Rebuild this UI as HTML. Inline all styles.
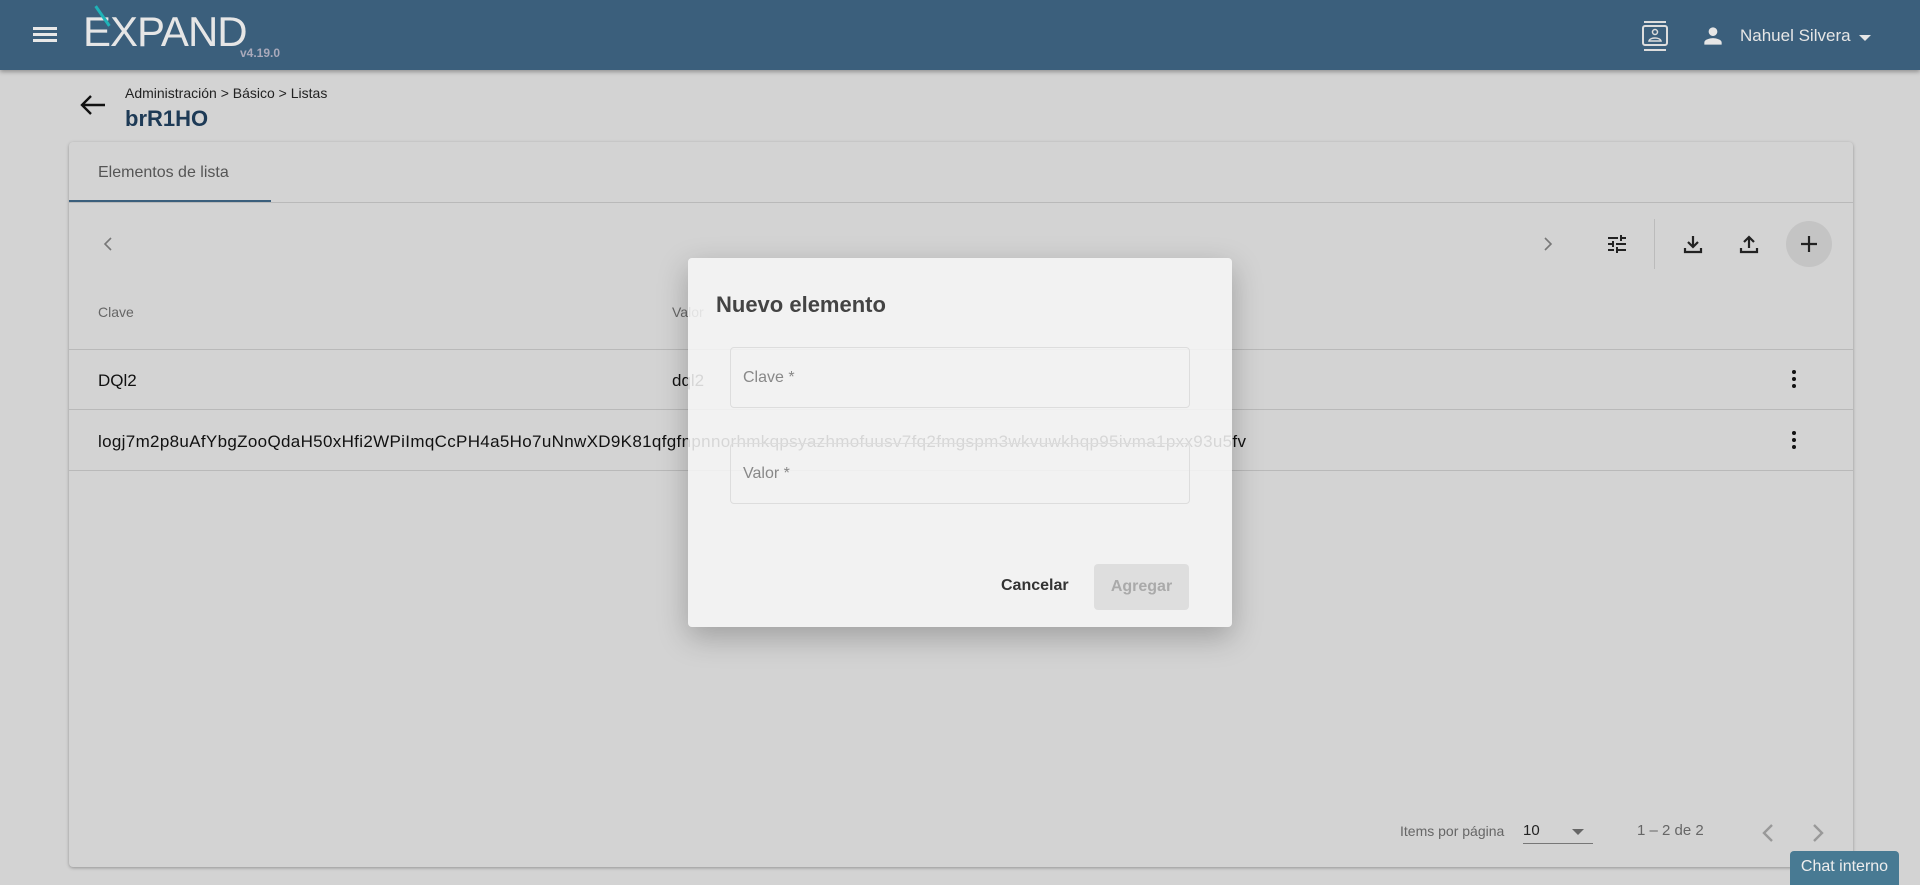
<!DOCTYPE html>
<html><head><meta charset="utf-8"><style>
*{box-sizing:border-box;margin:0;padding:0}
body{width:1920px;height:885px;overflow:hidden;background:#d3d3d3;font-family:"Liberation Sans",sans-serif;position:relative;color:#222}
.hdr{position:absolute;left:0;top:0;width:1920px;height:70px;background:#3b5f7c;box-shadow:0 2px 4px rgba(0,0,0,.3)}
.abs{position:absolute}
.card{position:absolute;left:69px;top:142px;width:1784px;height:725px;background:#d3d3d3;border-radius:4px;box-shadow:0 1px 3px rgba(0,0,0,.3)}
.line{position:absolute;left:0;width:1784px;height:1px;background:#b9b9b9}
.dlg{position:absolute;left:688px;top:258px;width:544px;height:369px;background:rgba(247,247,247,.86);border-radius:4px;box-shadow:0 10px 30px rgba(0,0,0,.25)}
.fld{position:absolute;left:42px;width:460px;height:61px;border:1px solid #ddd;border-radius:4px;color:#888;font-size:16px;padding:21px 12px}
</style></head><body>
<div class="hdr">
 <div class="abs" style="left:33px;top:27px;width:24px;height:3px;background:#e8e8e8;box-shadow:0 6px 0 #e8e8e8,0 12px 0 #e8e8e8"></div>
 <div class="abs" style="left:83px;top:8px;font-size:42px;color:#e6e6e6;letter-spacing:-1px;font-weight:300">EXPAND</div>
 <div class="abs" style="left:101px;top:4px;width:3px;height:24px;background:#1fb3b8;transform:rotate(-35deg)"></div>
 <div class="abs" style="left:240px;top:46px;font-size:12px;color:#aab;font-weight:bold">v4.19.0</div>
 <svg class="abs" style="left:1641px;top:20px" width="28" height="32" viewBox="0 0 28 32"><rect x="3" y="1" width="22" height="2" fill="#ddd"/><rect x="3" y="29" width="22" height="2" fill="#ddd"/><rect x="2" y="6" width="24" height="19" rx="2" fill="none" stroke="#ddd" stroke-width="2"/><circle cx="14" cy="12" r="2.5" fill="none" stroke="#ddd" stroke-width="1.5"/><path d="M8 21c1-4 11-4 12 0z" fill="none" stroke="#ddd" stroke-width="1.5"/></svg>
 <svg class="abs" style="left:1700px;top:23px" width="26" height="26" viewBox="0 0 24 24"><path fill="#e6e6e6" d="M12 12c2.2 0 4-1.8 4-4s-1.8-4-4-4-4 1.8-4 4 1.8 4 4 4zm0 2c-2.7 0-8 1.3-8 4v2h16v-2c0-2.7-5.3-4-8-4z"/></svg>
 <div class="abs" style="left:1740px;top:26px;font-size:17px;color:#e6e6e6">Nahuel Silvera</div>
 <div class="abs" style="left:1859px;top:35px;border:6px solid transparent;border-top-color:#e6e6e6"></div>
</div>
<svg class="abs" style="left:80px;top:94px" width="26" height="22" viewBox="0 0 26 22"><path d="M25 11H3M11 2L2 11l9 9" fill="none" stroke="#111" stroke-width="2.4"/></svg>
<div class="abs" style="left:125px;top:85px;font-size:14px;color:#222">Administración &gt; Básico &gt; Listas</div>
<div class="abs" style="left:125px;top:106px;font-size:22px;color:#1d3a56;font-weight:bold">brR1HO</div>
<div class="card">
 <div class="abs" style="left:29px;top:22px;font-size:16px;color:#555">Elementos de lista</div>
 <div class="abs" style="left:0;top:58px;width:202px;height:2px;background:#3b5f7c"></div>
 <div class="line" style="top:60px"></div>
 <svg class="abs" style="left:32px;top:92px" width="14" height="20" viewBox="0 0 14 20"><path d="M10 4l-6 6 6 6" fill="none" stroke="#777" stroke-width="1.6"/></svg>
 <svg class="abs" style="left:1472px;top:92px" width="14" height="20" viewBox="0 0 14 20"><path d="M4 4l6 6-6 6" fill="none" stroke="#777" stroke-width="1.6"/></svg>
 <svg class="abs" style="left:1536px;top:90px" width="24" height="24" viewBox="0 0 24 24"><path fill="#222" d="M3 17v2h6v-2H3zM3 5v2h10V5H3zm10 16v-2h8v-2h-8v-2h-2v6h2zM7 9v2H3v2h4v2h2V9H7zm14 4v-2H11v2h10zm-6-4h2V7h4V5h-4V3h-2v6z"/></svg>
 <div class="abs" style="left:1585px;top:77px;width:1px;height:50px;background:#bbb"></div>
 <svg class="abs" style="left:1612px;top:90px" width="24" height="24" viewBox="0 0 24 24"><path d="M12 4v11M7 10l5 5 5-5M4 16v4h16v-4" fill="none" stroke="#222" stroke-width="2.2"/></svg>
 <svg class="abs" style="left:1668px;top:90px" width="24" height="24" viewBox="0 0 24 24"><path d="M12 16V5M7 10l5-5 5 5M4 16v4h16v-4" fill="none" stroke="#222" stroke-width="2.2"/></svg>
 <div class="abs" style="left:1717px;top:79px;width:46px;height:46px;border-radius:50%;background:#c4c4c4"></div>
 <svg class="abs" style="left:1728px;top:90px" width="24" height="24" viewBox="0 0 24 24"><path d="M12 4v16M4 12h16" stroke="#222" stroke-width="2.2"/></svg>
 <div class="abs" style="left:29px;top:162px;font-size:14px;color:#666">Clave</div>
 <div class="abs" style="left:603px;top:162px;font-size:14px;color:#666">Valor</div>
 <div class="line" style="top:207px"></div>
 <div class="abs" style="left:29px;top:229px;font-size:17px;color:#111">DQl2</div>
 <div class="abs" style="left:603px;top:229px;font-size:17px;color:#111">dql2</div>
 <div class="abs" style="left:1723px;top:228px;width:4px;height:4px;border-radius:50%;background:#111;box-shadow:0 7px 0 #111,0 14px 0 #111"></div>
 <div class="line" style="top:267px"></div>
 <div class="abs" style="left:29px;top:290px;font-size:17px;color:#111;letter-spacing:0.33px;white-space:nowrap">logj7m2p8uAfYbgZooQdaH50xHfi2WPiImqCcPH4a5Ho7uNnwXD9K81qfgfnpnnorhmkqpsyazhmofuusv7fq2fmgspm3wkvuwkhqp95ivma1pxx93u5fv</div>
 <div class="abs" style="left:1723px;top:289px;width:4px;height:4px;border-radius:50%;background:#111;box-shadow:0 7px 0 #111,0 14px 0 #111"></div>
 <div class="line" style="top:328px"></div>
 <div class="abs" style="left:1331px;top:681px;font-size:14px;color:#666">Items por página</div>
 <div class="abs" style="left:1454px;top:680px;font-size:15px;color:#222">10</div>
 <div class="abs" style="left:1454px;top:701px;width:70px;height:1px;background:#777"></div>
 <div class="abs" style="left:1503px;top:687px;border:6px solid transparent;border-top-color:#666"></div>
 <div class="abs" style="left:1568px;top:680px;font-size:15px;color:#666">1 – 2 de 2</div>
 <svg class="abs" style="left:1690px;top:678px" width="18" height="26" viewBox="0 0 18 26"><path d="M13 5l-8 8 8 8" fill="none" stroke="#999" stroke-width="2.4"/></svg>
 <svg class="abs" style="left:1740px;top:678px" width="18" height="26" viewBox="0 0 18 26"><path d="M5 5l8 8-8 8" fill="none" stroke="#999" stroke-width="2.4"/></svg>
</div>
<div class="dlg">
 <div class="abs" style="left:28px;top:34px;font-size:22px;color:#444;font-weight:bold;font-weight:600">Nuevo elemento</div>
 <div class="fld" style="top:89px">Clave *</div>
 <div class="fld" style="top:185px">Valor *</div>
 <div class="abs" style="left:313px;top:319px;font-size:16px;color:#333;font-weight:bold">Cancelar</div>
 <div class="abs" style="left:406px;top:306px;width:95px;height:46px;background:#dedede;border-radius:4px;font-size:16px;color:#aaa;text-align:center;line-height:46px;font-weight:bold">Agregar</div>
</div>
<div class="abs" style="left:1790px;top:851px;width:109px;height:34px;background:#487a93;border-radius:4px 4px 0 0;color:#eee;font-size:16px;text-align:center;line-height:32px">Chat interno</div>
</body></html>
